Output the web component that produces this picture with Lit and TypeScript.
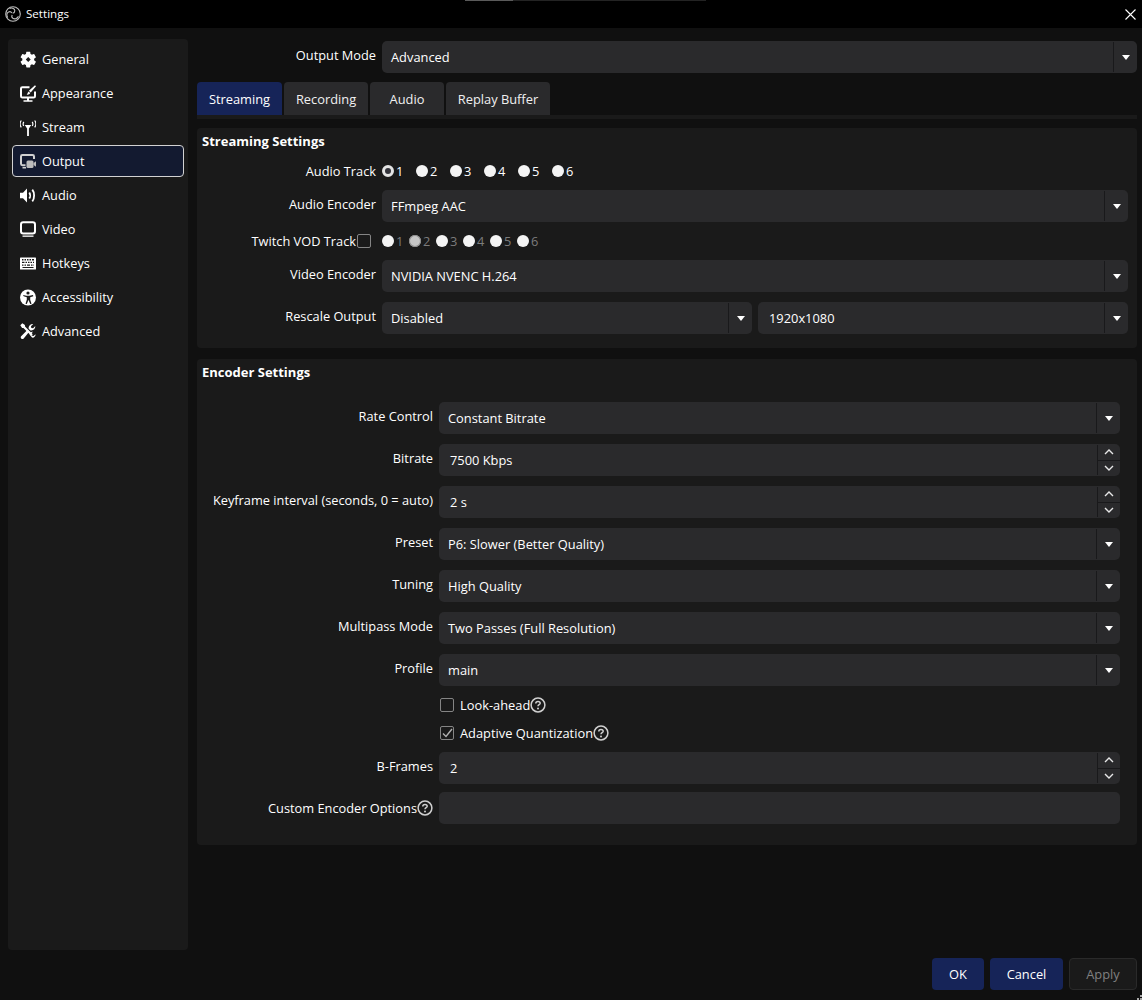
import { LitElement, html, css, svg } from "lit";
import { customElement } from "lit/decorators.js";

const icons: Record<string, unknown> = {
  general: svg`<path fill="#fff" fill-rule="evenodd" transform="translate(-1.600 -1.300) scale(.82)" d="M19.14 12.94c.04-.3.06-.61.06-.94 0-.32-.02-.64-.07-.94l2.03-1.58c.18-.14.23-.41.12-.61l-1.92-3.32c-.12-.22-.37-.29-.59-.22l-2.39.96c-.5-.38-1.03-.7-1.62-.94l-.36-2.54c-.04-.24-.24-.41-.48-.41h-3.84c-.24 0-.43.17-.47.41l-.36 2.54c-.59.24-1.13.57-1.62.94l-2.39-.96c-.22-.08-.47 0-.59.22L2.74 8.87c-.12.21-.08.47.12.61l2.03 1.58c-.05.3-.09.63-.09.94s.02.64.07.94l-2.03 1.58c-.18.14-.23.41-.12.61l1.92 3.32c.12.22.37.29.59.22l2.39-.96c.5.38 1.03.7 1.62.94l.36 2.54c.05.24.24.41.48.41h3.84c.24 0 .44-.17.47-.41l.36-2.54c.59-.24 1.13-.56 1.62-.94l2.39.96c.22.08.47 0 .59-.22l1.92-3.32c.12-.22.07-.47-.12-.61l-2.01-1.58zM12 15l-3-3 3-3 3 3z"/>`,
  appearance: svg`<path fill="none" stroke="#fff" stroke-width="2" d="M9.500 2.200H2.400Q1 2.200 1 3.600v7.600q0 1.400 1.400 1.400h11.200q1.400 0 1.400-1.400V6.500"/><path fill="#fff" d="M3.500 15.200h9v1.600h-9zM7 12.500h2v3H7zM15 .2l1 1-5.300 6.200-1.800-1.700zM8.400 6.400l1.800 1.700c-.5 1.400-1.900 1.900-3.600 1.600.9-.7 1-2.100 1.800-3.300z"/>`,
  stream: svg`<path fill="#fff" d="M7.100 8h1.800v9H7.100zM4.800 6h6.400L8 11z"/><path fill="none" stroke="#fff" stroke-width="1.200" d="M3.800 2.800c-.8 1.200-.8 3 0 4.200M1.300 1.500c-1.400 2-1.400 5 0 6.800M12.200 2.800c.8 1.200.8 3 0 4.200M14.700 1.500c1.400 2 1.400 5 0 6.800"/>`,
  output: svg`<path fill="none" stroke="#d0d0d0" stroke-width="2" d="M5.500 12.200H2.400Q1 12.200 1 10.800V3.400Q1 2 2.400 2h10.200Q14 2 14 3.400V6"/><path fill="#d0d0d0" d="M2.500 14h3.500v1.500H2.500z"/><rect fill="#bcbcbc" x="6.500" y="7.500" width="7" height="7.500" rx="1.500"/><path fill="#bcbcbc" d="M13.500 10l2.500-1.700v5.400L13.500 12z"/>`,
  audio: svg`<path fill="#fff" d="M0 5.800h3L7 1.500v14l-4-4.300H0z"/><path fill="none" stroke="#fff" stroke-width="1.800" d="M9.300 5.400c1.100 1.600 1.100 4.600 0 6.200M12.300 2.600c2.400 3 2.400 8.800 0 11.800"/>`,
  video: svg`<rect fill="none" stroke="#fff" stroke-width="2" x="1" y="1.300" width="14" height="11.200" rx="2.200"/><path fill="#fff" d="M2.500 14.500h11v1.300h-11z"/>`,
  hotkeys: svg`<path fill="#fff" fill-rule="evenodd" d="M.6 2.500h14.800q.6 0 .6.6v10.800q0 .6-.6.6H.6q-.6 0-.6-.6V3.100q0-.6.6-.6zM2 4v1.400h1.500V4zm2.500 0v1.400H6V4zM7 4v1.400h1.500V4zm2.500 0v1.400H11V4zM12 4v1.400h2V4zM2 6.700v1.400h2.500V6.700zm3.500 0v1.400H7V6.700zm2.500 0v1.400h1.500V6.700zm2.500 0v1.400H12V6.700zm2.500 0v1.400h1V6.700zM2 9.400v1.400h1.500V9.400zm2.500 0v1.400H6V9.400zm2.500 0v1.400h3V9.400zm4 0v1.400h1.500V9.400zm2.500 0v1.400H14V9.400zM2.500 12.900h11v-1h-11z"/>`,
  accessibility: svg`<circle fill="#fff" cx="8" cy="8.500" r="8"/><circle fill="#1a1a1a" cx="8" cy="4" r="1.600"/><path fill="#1a1a1a" d="M3 6l3.500.8h3L13 6l.3 1.300-3.100 1v2.400l1.300 4-1.300.4-1.500-3.800h-.4l-1.500 3.800-1.300-.4 1.300-4V8.300l-3.100-1z"/>`,
  advanced: svg`<path fill="none" stroke="#fff" stroke-width="2.200" d="M2.500 2.500L12 12"/><path fill="#fff" d="M.3 2.300L2.300.3l2.600 1.800.2 1.800-1.200 1.200-1.800-.2zM9.700 11.800c-.4-1.900 1.400-3.500 3.300-3.100l-1.700 1.900.3 2 2 .4 1.900-1.800c.4 1.900-1.600 3.800-3.500 3.400zM10.200 7.200L8.700 5.700c-.4-2.500 1.600-4.900 4.500-4.700L11 3.200l.3 1.700 1.800.4 2.200-2.200c.2 2.800-2.100 4.800-4.600 4.400zM7.600 6.800l1.800 1.800-5.700 6.800c-.7.800-1.700.9-2.500.1s-.6-1.800.2-2.500z"/>`,
};

const nav: [string, string][] = [
  ["general", "General"],
  ["appearance", "Appearance"],
  ["stream", "Stream"],
  ["output", "Output"],
  ["audio", "Audio"],
  ["video", "Video"],
  ["hotkeys", "Hotkeys"],
  ["accessibility", "Accessibility"],
  ["advanced", "Advanced"],
];

@customElement("app-root")
export class AppRoot extends LitElement {
  static styles = css`
    :host {
      display: flex;
      flex-direction: column;
      width: 1142px;
      height: 1000px;
      background: #101010;
      color: #fff;
      font: 12.850px/18px "Open Sans", sans-serif;
      overflow: hidden;
      position: relative;
    }
    .title {
      height: 28px;
      flex: none;
      background: #000;
      display: flex;
      align-items: center;
      padding: 0 6px 0 5px;
      gap: 5px;
      font-size: 11.600px;
      position: relative;
    }
    .title .grow { flex: 1; }
    .strip {
      position: absolute;
      left: 465px;
      top: 0;
      width: 241px;
      height: 1px;
      background: linear-gradient(90deg, #5a5a5a 48px, #232323 48px);
    }
    .main {
      display: flex;
      gap: 9px;
      padding: 11px 5px 0 8px;
      flex: none;
    }
    .side {
      width: 180px;
      height: 911px;
      box-sizing: border-box;
      background: #1a1a1a;
      border-radius: 4px;
      padding: 4px;
      display: flex;
      flex-direction: column;
      gap: 2px;
    }
    .item {
      height: 32px;
      box-sizing: border-box;
      padding: 0 7px;
      border: 1px solid transparent;
      border-radius: 4px;
      display: flex;
      align-items: center;
      gap: 6px;
      font-size: 12.750px;
    }
    .item.sel { background: #131a30; border-color: #d2d2d2; }
    .item svg { width: 16px; height: 17px; flex: none; }
    .right { flex: 1; display: flex; flex-direction: column; min-width: 0; padding-top: 2px; }
    .top-row {
      display: grid;
      grid-template-columns: 179px 1fr;
      column-gap: 6px;
    }
    .lbl {
      text-align: right;
      align-self: center;
      white-space: nowrap;
      font-size: 12.800px;
    }
    .lbl.up { padding-bottom: 4px; }
    .lbl .help { vertical-align: -3px; }
    .combo, .spin, .edit {
      height: 32px;
      background: #2a2a2c;
      border-radius: 5px;
      display: flex;
      align-items: center;
      min-width: 0;
      position: relative;
    }
    .combo span, .spin span { flex: 1; padding-left: 9px; }
    .spin span { padding-left: 11px; }
    .pair .combo:last-child span { padding-left: 11px; }
    .arrow {
      width: 23px;
      height: 30px;
      flex: none;
      border-left: 1px solid #19191b;
      display: flex;
      align-items: center;
      justify-content: center;
    }
    .arrow i {
      display: block;
      width: 0;
      height: 0;
      border-left: 4.500px solid transparent;
      border-right: 4.500px solid transparent;
      border-top: 5px solid #fff;
    }
    .steps {
      width: 22px;
      height: 30px;
      flex: none;
      border-left: 1px solid #19191b;
      display: flex;
      flex-direction: column;
    }
    .steps div {
      flex: 1;
      display: flex;
      align-items: center;
      justify-content: center;
    }
    .steps div:first-child { border-bottom: 1px solid #19191b; }
    .steps svg { width: 10px; height: 6px; }
    .tabs { display: flex; gap: 2px; margin-top: 9px; }
    .tab {
      height: 33px;
      box-sizing: border-box;
      background: #2a2a2c;
      border-radius: 4px 4px 0 0;
      display: flex;
      align-items: center;
      justify-content: center;
      padding-top: 1px;
      color: #f0f0f0;
    }
    .tab.on { background: #162458; color: #fff; }
    .tabline { height: 4px; background: #1a1a1a; margin-bottom: 9px; }
    .group {
      background: #1a1a1a;
      border-radius: 4px;
      margin-bottom: 11px;
    }
    .gt {
      height: 26px;
      line-height: 26px;
      padding-left: 5px;
      font-weight: 700;
      font-size: 13px;
    }
    .rows { display: flex; flex-direction: column; gap: 10px; }
    .rows.a { padding: 8px 9px 14px 0; }
    .rows.b { padding: 17px 17px 21px 0; }
    .row { display: grid; column-gap: 6px; }
    .a .row { grid-template-columns: 179px 1fr; }
    .b .row { grid-template-columns: 236px 1fr; }
    .short { height: 18px; }
    .pair { display: flex; gap: 6px; }
    .pair .combo { flex: 1; }
    .radios { display: flex; align-items: center; }
    .r { display: flex; align-items: center; gap: 2px; }
    .radios.en .r { width: 34px; }
    .radios.dis .r { width: 27px; color: #7c7c7c; }
    .dot {
      width: 12px;
      height: 12px;
      border-radius: 50%;
      background: #f4f4f4;
      flex: none;
    }
    .dot.on {
      box-sizing: border-box;
      background: #33333a;
      border: 3px solid #e4e4e4;
    }
    .dot.gr { background: #c6c6c6; box-shadow: inset 0 0 0 1px #8c8c8c; }
    .tw-wrap {
      display: flex;
      align-items: center;
      justify-content: flex-end;
      white-space: nowrap;
      gap: 1px;
      padding-right: 11px;
      margin-right: -6px;
    }
    .cb {
      width: 14px;
      height: 14px;
      box-sizing: border-box;
      border: 1px solid #858585;
      border-radius: 2px;
      flex: none;
      display: inline-flex;
      align-items: center;
      justify-content: center;
    }
    .cb svg { width: 11px; height: 10px; }
    .chk { display: flex; align-items: center; gap: 6px; padding-left: 1px; }
    .chk span { display: inline-flex; align-items: center; }
    .help { width: 16px; height: 16px; flex: none; }
    .bf { margin-top: -2px; }
    .foot {
      display: flex;
      justify-content: flex-end;
      gap: 6px;
      padding: 8px 5px 0 0;
    }
    .btn {
      height: 32px;
      box-sizing: border-box;
      background: #162458;
      border-radius: 4px;
      display: flex;
      align-items: center;
      justify-content: center;
    }
    .btn.ok { width: 52px; }
    .btn.cancel { width: 73px; }
    .btn.apply { width: 68px; background: #1a1a1a; border: 1px solid #2a2a2a; color: #808080; }
    .tab.t1 { width: 85px; }
    .tab.t2 { width: 84px; }
    .tab.t3 { width: 74px; }
    .tab.t4 { width: 104px; }
    .logo { flex: none; }
    .grip { position: absolute; right: 0; bottom: 0; width: 5px; height: 5px; }
  `;

  combo(t: string) {
    return html`<div class="combo"><span>${t}</span><div class="arrow"><i></i></div></div>`;
  }

  spin(t: string) {
    return html`<div class="spin"><span>${t}</span><div class="steps">
      <div><svg viewBox="0 0 10 6"><path d="M1 5l4-4 4 4" fill="none" stroke="#e8e8e8" stroke-width="1.400"/></svg></div>
      <div><svg viewBox="0 0 10 6"><path d="M1 1l4 4 4-4" fill="none" stroke="#e8e8e8" stroke-width="1.400"/></svg></div>
    </div></div>`;
  }

  help() {
    return html`<svg class="help" viewBox="0 0 16 16"><circle cx="8" cy="8" r="6.900" fill="none" stroke="#d0d0d0" stroke-width="1.500"/><path d="M5.800 6.400c0-1.300 1-2 2.200-2s2.200.7 2.200 1.800c0 1.500-2.200 1.500-2.200 3.100" fill="none" stroke="#d0d0d0" stroke-width="1.500"/><circle cx="8" cy="11.500" r="1" fill="#d0d0d0"/></svg>`;
  }

  rowC(label: string, t: string) {
    return html`<div class="row"><div class="lbl up">${label}</div>${this.combo(t)}</div>`;
  }

  rowS(label: string, t: string) {
    return html`<div class="row"><div class="lbl up">${label}</div>${this.spin(t)}</div>`;
  }

  logo() {
    return html`<svg class="logo" width="16" height="16" viewBox="0 0 16 16">
      <circle cx="8" cy="8" r="7.300" fill="none" stroke="#bdbdbd" stroke-width="1.100"/>
      <path d="M4.600 2.400c2.800-.9 5.200.2 5.200 2.300 0 1.500-1.100 2.300-2.100 2.500M13.500 10.400c-1.500 2.500-4 3-5.600 1.900-1.200-.9-1.300-2.300-.7-3.300M2.700 11.600C1.300 9.200 1.700 6.700 3.600 5.900c1.400-.6 2.700.1 3.300 1.100" fill="none" stroke="#bdbdbd" stroke-width="1.100"/>
    </svg>`;
  }

  render() {
    return html`
      <div class="title">
        ${this.logo()}<span>Settings</span><div class="strip"></div><div class="grow"></div>
        <svg width="11" height="11" viewBox="0 0 11 11"><path d="M.5.5l10 10M10.500.5l-10 10" stroke="#fff" stroke-width="1.100"/></svg>
      </div>
      <div class="main">
        <nav class="side">
          ${nav.map(
            ([k, t]) => html`<div class="item ${k === "output" ? "sel" : ""}">
              <svg viewBox="0 0 16 17">${icons[k]}</svg><span>${t}</span>
            </div>`
          )}
        </nav>
        <div class="right">
          <div class="top-row"><div class="lbl up">Output Mode</div>${this.combo("Advanced")}</div>
          <div class="tabs">
            <div class="tab t1 on">Streaming</div>
            <div class="tab t2">Recording</div>
            <div class="tab t3">Audio</div>
            <div class="tab t4">Replay Buffer</div>
          </div>
          <div class="tabline"></div>
          <section class="group">
            <div class="gt">Streaming Settings</div>
            <div class="rows a">
              <div class="row short">
                <div class="lbl">Audio Track</div>
                <div class="radios en">
                  ${[1, 2, 3, 4, 5, 6].map(
                    (n) => html`<div class="r"><div class="dot ${n === 1 ? "on" : ""}"></div>${n}</div>`
                  )}
                </div>
              </div>
              ${this.rowC("Audio Encoder", "FFmpeg AAC")}
              <div class="row short">
                <div class="tw-wrap lbl">Twitch VOD Track<div class="cb"></div></div>
                <div class="radios dis">
                  ${[1, 2, 3, 4, 5, 6].map(
                    (n) => html`<div class="r"><div class="dot ${n === 2 ? "gr" : ""}"></div>${n}</div>`
                  )}
                </div>
              </div>
              ${this.rowC("Video Encoder", "NVIDIA NVENC H.264")}
              <div class="row">
                <div class="lbl up">Rescale Output</div>
                <div class="pair">${this.combo("Disabled")}${this.combo("1920x1080")}</div>
              </div>
            </div>
          </section>
          <section class="group">
            <div class="gt">Encoder Settings</div>
            <div class="rows b">
              ${this.rowC("Rate Control", "Constant Bitrate")}
              ${this.rowS("Bitrate", "7500 Kbps")}
              ${this.rowS("Keyframe interval (seconds, 0 = auto)", "2 s")}
              ${this.rowC("Preset", "P6: Slower (Better Quality)")}
              ${this.rowC("Tuning", "High Quality")}
              ${this.rowC("Multipass Mode", "Two Passes (Full Resolution)")}
              ${this.rowC("Profile", "main")}
              <div class="row short">
                <div></div>
                <div class="chk"><div class="cb"></div><span>Look-ahead${this.help()}</span></div>
              </div>
              <div class="row short">
                <div></div>
                <div class="chk">
                  <div class="cb"><svg viewBox="0 0 11 10"><path d="M1 5.500l3 3L10 1" fill="none" stroke="#b0b0b0" stroke-width="1.400"/></svg></div>
                  <span>Adaptive Quantization${this.help()}</span>
                </div>
              </div>
              ${this.rowS("B-Frames", "2")}
              <div class="row bf">
                <div class="lbl">Custom Encoder Options${this.help()}</div>
                <div class="edit"></div>
              </div>
            </div>
          </section>
        </div>
      </div>
      <div class="foot">
        <div class="btn ok">OK</div>
        <div class="btn cancel">Cancel</div>
        <div class="btn apply">Apply</div>
      </div>
      <svg class="grip" viewBox="0 0 5 5"><path fill="#a8a8a8" d="M3 0h2v2H3zM0 3h2v2H0zM3 3h2v2H3z"/></svg>
    `;
  }
}
